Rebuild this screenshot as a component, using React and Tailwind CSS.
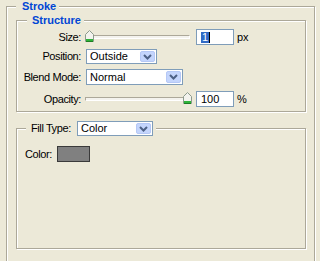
import React from "react";

const font = { fontFamily: '"Liberation Sans", Arial, sans-serif' };

function Chevron() {
  return (
    <svg width="9" height="6" viewBox="0 0 9 6">
      <path d="M1 1 L4.5 4.5 L8 1" fill="none" stroke="#4d6185" strokeWidth="2" />
    </svg>
  );
}

function Select({ value, width, height = "h-[15px]" }) {
  return (
    <div
      className={`flex items-stretch border border-[#7f9db9] bg-white ${height} ${width}`}
    >
      <div className="flex-1 pl-[3px] flex items-center text-[11px] leading-none text-black">
        {value}
      </div>
      <div className="m-[1px] w-[15px] flex items-center justify-center rounded-[2px] border border-[#b5c8f6] bg-[#c4d5fc]">
        <Chevron />
      </div>
    </div>
  );
}

function Thumb() {
  return (
    <svg width="9" height="12" viewBox="0 0 9 12">
      <path d="M0.5 4.5 L4.5 0.5 L8.5 4.5 L8.5 11.5 L0.5 11.5 Z" fill="#f3f3ee" stroke="#8c9a8c" />
      <rect x="1" y="9" width="7" height="2" fill="#2fb33a" />
      <rect x="1" y="11" width="7" height="1" fill="#1d7d24" />
    </svg>
  );
}

function Slider({ pos }) {
  return (
    <div className="relative w-[105px] h-[16px] flex items-center">
      <div className="w-full h-[4px] border border-t-[#aca899] border-l-[#aca899] border-b-white border-r-white bg-[#f4f3ee]" />
      <div className={`absolute top-[1px] ${pos}`}>
        <Thumb />
      </div>
    </div>
  );
}

function TextBox({ children }) {
  return (
    <div className="w-[38px] h-[16px] border border-[#7f9db9] bg-white flex items-center pl-[4px] text-[11px] text-black">
      {children}
    </div>
  );
}

const etched =
  "relative border border-[#aca899] shadow-[1px_1px_0_#fff,inset_1px_1px_0_#fff]";

export default function App() {
  return (
    <div
      className="w-[320px] h-[261px] overflow-hidden bg-[#ece9d8] pl-[6px] pt-[6px] text-[11px] text-black"
      style={font}
    >
      <div className={`${etched} w-[309px] h-[300px] pt-[13px] pl-[9px]`}>
        <span className="absolute left-[9px] top-[-7px] h-[13px] leading-[13px] bg-[#ece9d8] pl-[6px] pr-[3px] font-bold text-[#0046d5]">
          Stroke
        </span>

        <div className={`${etched} w-[290px] h-[92px] pt-[8px]`}>
          <span className="absolute left-[10px] top-[-7px] h-[13px] leading-[13px] bg-[#ece9d8] pl-[5px] pr-[3px] font-bold text-[#0046d5]">
            Structure
          </span>

          <div className="flex items-center h-[16px]">
            <div className="w-[64px] text-right tracking-[-0.4px]">Size:</div>
            <div className="ml-[4px]">
              <Slider pos="left-0" />
            </div>
            <div className="ml-[6px]">
              <TextBox>
                <span className="bg-[#316ac5] text-white px-[1px] leading-[11px]">1</span>
                <span className="w-[1px] h-[11px] bg-black" />
              </TextBox>
            </div>
            <span className="ml-[3px]">px</span>
          </div>

          <div className="flex items-center h-[15px] mt-[4px]">
            <div className="w-[64px] text-right tracking-[-0.4px]">Position:</div>
            <div className="ml-[5px]">
              <Select value="Outside" width="w-[71px]" />
            </div>
          </div>

          <div className="flex items-center h-[16px] mt-[5px]">
            <div className="w-[64px] text-right tracking-[-0.4px]">Blend Mode:</div>
            <div className="ml-[5px]">
              <Select value="Normal" width="w-[97px]" height="h-[16px]" />
            </div>
          </div>

          <div className="flex items-center h-[16px] mt-[6px]">
            <div className="w-[64px] text-right tracking-[-0.4px]">Opacity:</div>
            <div className="ml-[4px]">
              <Slider pos="right-[-2px]" />
            </div>
            <div className="ml-[6px]">
              <TextBox>100</TextBox>
            </div>
            <span className="ml-[3px]">%</span>
          </div>
        </div>

        <div className={`${etched} w-[290px] h-[121px] mt-[16px] pt-[17px] pl-[8px]`}>
          <div className="absolute left-[9px] top-[-8px] h-[15px] flex items-center bg-[#ece9d8] pl-[5px] pr-[3px]">
            <span className="w-[41px] tracking-[-0.4px]">Fill Type:</span>
            <div className="ml-[5px]">
              <Select value="Color" width="w-[76px]" />
            </div>
          </div>

          <div className="flex items-center h-[16px]">
            <span className="w-[32px] tracking-[-0.4px]">Color:</span>
            <div className="w-[33px] h-[16px] border border-[#3a3a3a] bg-[#808080]" />
          </div>
        </div>
      </div>
    </div>
  );
}
